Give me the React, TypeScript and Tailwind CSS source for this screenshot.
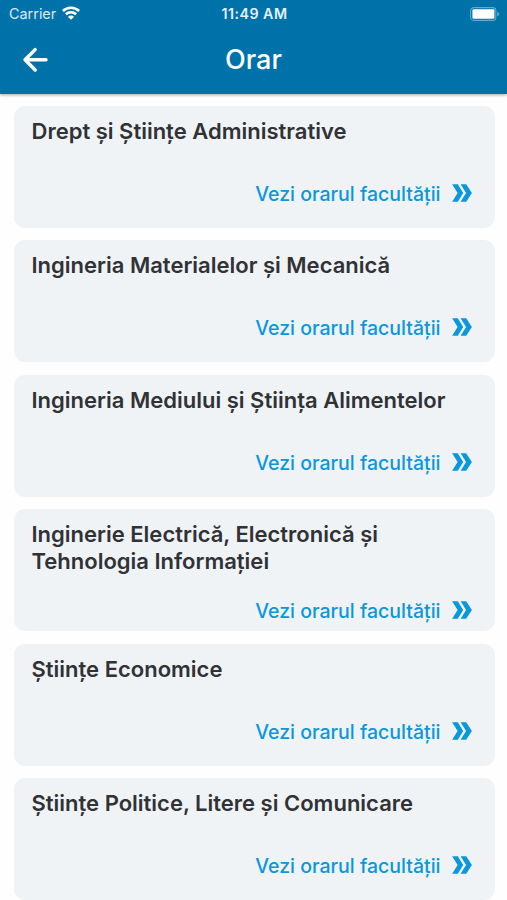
const faculties = [
  "Drept și Științe Administrative",
  "Ingineria Materialelor și Mecanică",
  "Ingineria Mediului și Știința Alimentelor",
  "Inginerie Electrică, Electronică și Tehnologia Informației",
  "Științe Economice",
  "Științe Politice, Litere și Comunicare",
];

function WifiIcon() {
  return (
    <svg width="18" height="14" viewBox="0 0 18 14" fill="none" stroke="white" strokeWidth="2.6">
      <path d="M0.9 5C5.4 0.6 12.6 0.6 17.1 5" />
      <path d="M3.9 8.3C6.8 5.6 11.2 5.6 14.1 8.3" />
      <path d="M9 13.8L5.9 10.8C7.7 9.2 10.3 9.2 12.1 10.8Z" fill="white" stroke="none" />
    </svg>
  );
}

function BatteryIcon() {
  return (
    <svg width="30" height="14" viewBox="0 0 30 14" fill="none">
      <rect x="0.6" y="0.6" width="25.2" height="12.8" rx="3.2" stroke="white" strokeOpacity="0.4" strokeWidth="1.1" />
      <rect x="2.4" y="2.2" width="22" height="9.6" rx="1.4" fill="white" />
      <path d="M27.2 4.7C29.9 5.7 29.9 8.3 27.2 9.3Z" fill="white" fillOpacity="0.4" />
    </svg>
  );
}

function BackIcon() {
  return (
    <svg
      width="26"
      height="26"
      viewBox="0 0 26 26"
      fill="none"
      stroke="white"
      strokeWidth="3.4"
      strokeLinecap="round"
      strokeLinejoin="round"
    >
      <path d="M13.2 2.6L3 12.8L13.2 23M3.5 12.8H24" />
    </svg>
  );
}

function DoubleChevron() {
  return (
    <svg width="20" height="18" viewBox="0 0 20 18" fill="#0b97dc">
      <path d="M0.1 0.2H5.8L11.2 9L5.8 17.8H0.1L5.6 9Z" />
      <path d="M8.6 0.2H14.2L19.9 9L14.2 17.8H8.6L14.1 9Z" />
    </svg>
  );
}

function FacultyCard({ name }: { name: string }) {
  return (
    <li className="flex h-[122px] flex-col rounded-[11px] bg-[#eff3f6] pt-3 pr-[22.5px] pl-[18px]">
      <h2 className="text-[22px] leading-[27px] font-semibold text-[#303235]">{name}</h2>
      <a
        href="#"
        className="mt-[15px] flex flex-1 items-center justify-end gap-[11.5px] text-[19.5px] leading-6 font-medium text-[#0b97dc]"
      >
        Vezi orarul facultății
        <span className="pb-[2px]">
          <DoubleChevron />
        </span>
      </a>
    </li>
  );
}

export default function App() {
  return (
    <div className="flex h-[900px] w-full flex-col overflow-hidden bg-[#fefefe] font-['Inter',sans-serif]">
      <header className="h-[94px] shrink-0 bg-[#0072aa] text-white shadow-[0_1px_3px_rgba(0,0,0,0.35)]">
        <div className="grid h-[27px] grid-cols-3 items-center pr-[7px] pl-[9px] text-[14.4px]">
          <div className="flex items-center gap-1.5 text-white/85">
            <span className="pt-px">Carrier</span>
            <WifiIcon />
          </div>
          <span className="text-center text-[14.2px] font-semibold tracking-[0.5px] text-white/90">11:49 AM</span>
          <div className="flex justify-end">
            <BatteryIcon />
          </div>
        </div>
        <div className="grid h-[65px] grid-cols-3 items-center px-[22px]">
          <button type="button" aria-label="Înapoi">
            <BackIcon />
          </button>
          <h1 className="pt-0.5 text-center text-[27px] font-medium">Orar</h1>
        </div>
      </header>
      <ul className="flex flex-col gap-[12.4px] pt-3 pr-[12.5px] pl-[13.5px]">
        {faculties.map((name) => (
          <FacultyCard key={name} name={name} />
        ))}
      </ul>
    </div>
  );
}
